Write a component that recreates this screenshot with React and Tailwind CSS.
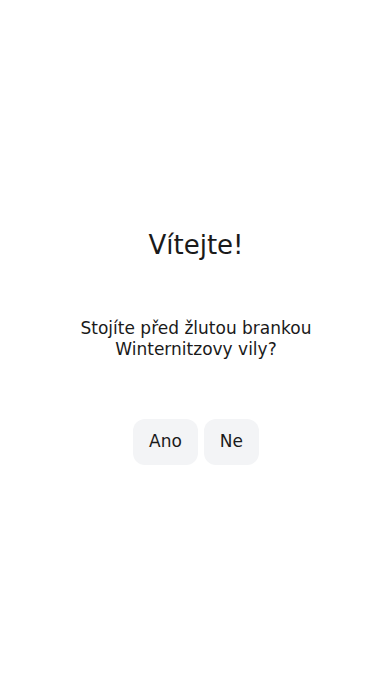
export default function App() {
  return (
    <div className="flex h-[696px] w-full flex-col items-center justify-center bg-white pb-[4px] text-[#1a1a1a]" style={{ fontFamily: '"DejaVu Sans", sans-serif' }}>
      <h1 className="text-[26px] leading-[36px] font-normal">Vítejte!</h1>
      <p className="mt-[55px] text-center text-[17px] leading-[21px]">
        Stojíte před žlutou brankou<br />Winternitzovy vily?
      </p>
      <div className="mt-[59px] flex gap-[6px]">
        <button className="h-[46px] rounded-xl bg-[#f3f4f6] px-4 text-[17px]">Ano</button>
        <button className="h-[46px] rounded-xl bg-[#f3f4f6] px-4 text-[17px]">Ne</button>
      </div>
    </div>
  );
}
